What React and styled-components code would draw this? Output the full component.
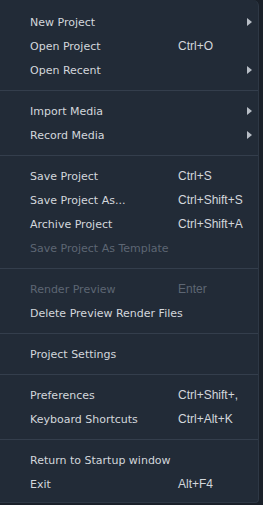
import React from 'react';
import styled, { createGlobalStyle } from 'styled-components';

const GlobalStyle = createGlobalStyle`
  html, body {
    margin: 0;
    padding: 0;
    background: #1a2029;
  }
  body {
    width: 263px;
    height: 505px;
    overflow: hidden;
  }
`;

const Menu = styled.div`
  box-sizing: border-box;
  width: 259px;
  height: 503px;
  padding: 10px 0 6px;
  background: #222b37;
  border: 1px solid #2e3845;
  border-left: none;
  border-top: none;
  border-radius: 0 6px 4px 0;
  font-family: Tahoma, "DejaVu Sans", "Liberation Sans", sans-serif;
  font-size: 11px;
  color: #d3d7dc;
`;

const Row = styled.div`
  display: grid;
  grid-template-columns: 148px 1fr 11px;
  align-items: center;
  height: 24px;
  padding-left: 30px;
  color: ${({ disabled }) => (disabled ? '#5d6673' : '#d3d7dc')};
  white-space: nowrap;
`;

const Shortcut = styled.span`
  font-family: "Liberation Sans", Arial, sans-serif;
  font-size: 12px;
`;

const Arrow = styled.span`
  width: 0;
  height: 0;
  border-top: 4px solid transparent;
  border-bottom: 4px solid transparent;
  border-left: 5px solid #b8bec6;
`;

const Separator = styled.div`
  height: 1px;
  margin: 8px 0;
  background: #343e4c;
`;

const groups = [
  [
    { label: 'New Project', sub: true },
    { label: 'Open Project', key: 'Ctrl+O' },
    { label: 'Open Recent', sub: true },
  ],
  [
    { label: 'Import Media', sub: true },
    { label: 'Record Media', sub: true },
  ],
  [
    { label: 'Save Project', key: 'Ctrl+S' },
    { label: 'Save Project As...', key: 'Ctrl+Shift+S' },
    { label: 'Archive Project', key: 'Ctrl+Shift+A' },
    { label: 'Save Project As Template', disabled: true },
  ],
  [
    { label: 'Render Preview', key: 'Enter', disabled: true },
    { label: 'Delete Preview Render Files' },
  ],
  [{ label: 'Project Settings' }],
  [
    { label: 'Preferences', key: 'Ctrl+Shift+,' },
    { label: 'Keyboard Shortcuts', key: 'Ctrl+Alt+K' },
  ],
  [
    { label: 'Return to Startup window' },
    { label: 'Exit', key: 'Alt+F4' },
  ],
];

export default function App() {
  return (
    <>
      <GlobalStyle />
      <Menu>
        {groups.map((group, gi) => (
          <React.Fragment key={gi}>
            {gi > 0 && <Separator />}
            {group.map((item) => (
              <Row key={item.label} disabled={item.disabled}>
                <span>{item.label}</span>
                <Shortcut>{item.key || ''}</Shortcut>
                {item.sub ? <Arrow /> : <span />}
              </Row>
            ))}
          </React.Fragment>
        ))}
      </Menu>
    </>
  );
}
